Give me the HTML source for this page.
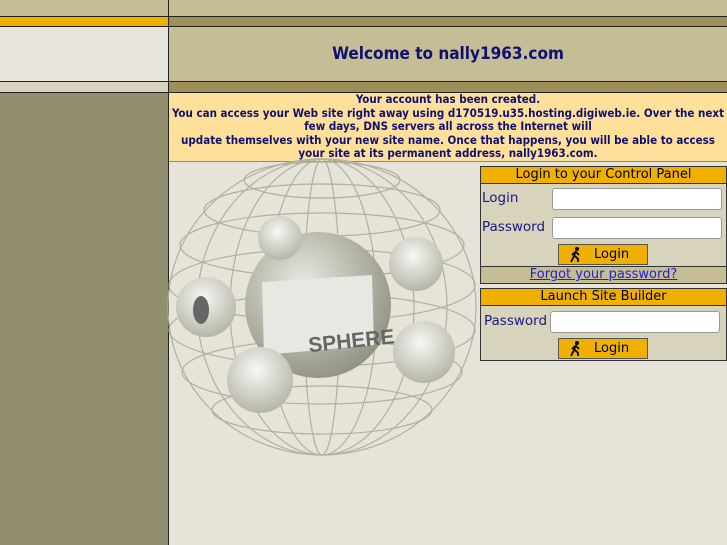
<!DOCTYPE html>
<html><head><style>
body{margin:0;width:727px;height:545px;background:#e6e4d8;font-family:"DejaVu Sans","Liberation Sans",sans-serif;position:relative;overflow:hidden}
div{position:absolute;box-sizing:border-box}
.ln{background:#222;height:1px}
.t{color:#1a1a80}
input{position:absolute;border:1px solid #999;border-radius:3px;background:#fff;height:22px;box-sizing:border-box}
.btn{background:#f0b000;border:1px solid #555;font-size:13px;color:#000;line-height:19px}
.btn svg{position:absolute;left:10px;top:2px}
.btn span{position:absolute;left:35px;top:0}
</style></head><body>
<div style="left:0;top:0;width:168px;height:16px;background:#c4bd96"></div>
<div style="left:169px;top:0;width:558px;height:16px;background:#c4bd96"></div>
<div style="left:0;top:17px;width:168px;height:9px;background:#f0b000"></div>
<div style="left:169px;top:17px;width:558px;height:9px;background:#9c9058"></div>
<div style="left:0;top:27px;width:168px;height:54px;background:#e8e6dc"></div>
<div style="left:169px;top:27px;width:558px;height:54px;background:#c4bd96;text-align:center;line-height:54px;font-size:17px;font-weight:bold;color:#101070;font-family:'DejaVu Sans Condensed','DejaVu Sans',sans-serif;font-stretch:condensed">Welcome to nally1963.com</div>
<div style="left:0;top:82px;width:168px;height:10px;background:#d8d3bd"></div>
<div style="left:169px;top:82px;width:558px;height:10px;background:#9c9058"></div>
<div class="ln" style="left:0;top:16px;width:727px"></div>
<div class="ln" style="left:0;top:26px;width:727px"></div>
<div class="ln" style="left:0;top:81px;width:727px"></div>
<div class="ln" style="left:0;top:92px;width:727px"></div>
<div style="left:0;top:93px;width:168px;height:452px;background:#938e6e"></div>
<div style="left:168px;top:0;width:1px;height:545px;background:#222"></div>
<div style="left:169px;top:93px;width:558px;height:68px;background:#ffe09a;text-align:center;font-size:11.5px;font-weight:bold;color:#101070;line-height:13.6px;font-family:'DejaVu Sans Condensed','DejaVu Sans',sans-serif;font-stretch:condensed;white-space:nowrap">Your account has been created.<br>You can access your Web site right away using d170519.u35.hosting.digiweb.ie. Over the next<br>few days, DNS servers all across the Internet will<br>update themselves with your new site name. Once that happens, you will be able to access<br>your site at its permanent address, nally1963.com.</div>
<div class="ln" style="left:169px;top:161px;width:558px;background:#888"></div>
<svg style="position:absolute;left:0;top:0" width="727" height="545">
<g fill="none" stroke="#b0b0a0" stroke-width="1.2">
<ellipse cx="322" cy="307" rx="154" ry="148"/>
<ellipse cx="322" cy="307" rx="125" ry="148"/>
<ellipse cx="322" cy="307" rx="92" ry="148"/>
<ellipse cx="322" cy="307" rx="55" ry="148"/>
<ellipse cx="322" cy="307" rx="18" ry="148"/>
<ellipse cx="322" cy="180" rx="78" ry="18"/>
<ellipse cx="322" cy="210" rx="118" ry="26"/>
<ellipse cx="322" cy="245" rx="142" ry="32"/>
<ellipse cx="322" cy="285" rx="153" ry="36"/>
<ellipse cx="322" cy="330" rx="153" ry="36"/>
<ellipse cx="322" cy="372" rx="140" ry="32"/>
<ellipse cx="322" cy="410" rx="110" ry="24"/>
</g>
<defs><radialGradient id="g" cx="40%" cy="35%" r="70%"><stop offset="0" stop-color="#e8e8e0"/><stop offset="1" stop-color="#8f9080"/></radialGradient>
<radialGradient id="s" cx="45%" cy="35%" r="70%"><stop offset="0" stop-color="#f8f8f4"/><stop offset="1" stop-color="#b0b0a2"/></radialGradient></defs>
<circle cx="318" cy="305" r="73" fill="url(#g)"/>
<path d="M262 282 L372 275 L374 345 L264 355 Z" fill="#e8e8e2"/>
<text x="308" y="349" font-size="21" font-weight="bold" fill="#666" font-family="Liberation Sans" transform="rotate(-6 340 340)">SPHERE</text>
<circle cx="206" cy="307" r="30" fill="url(#s)"/>
<circle cx="260" cy="380" r="33" fill="url(#s)"/>
<circle cx="280" cy="238" r="22" fill="url(#s)"/>
<circle cx="416" cy="264" r="27" fill="url(#s)"/>
<circle cx="424" cy="352" r="31" fill="url(#s)"/>
<ellipse cx="201" cy="310" rx="8" ry="14" fill="#666"/>
</svg>
<div style="left:480px;top:166px;width:247px;height:118px;background:#d8d3bd;border:1px solid #333"></div>
<div style="left:481px;top:167px;width:245px;height:17px;background:#f0b000;border-bottom:1px solid #333;text-align:center;font-size:13px;line-height:16px">Login to your Control Panel</div>
<div class="t" style="left:482px;top:190px;font-size:13.5px">Login</div>
<input style="left:552px;top:188px;width:170px">
<div class="t" style="left:482px;top:219px;font-size:13.5px">Password</div>
<input style="left:552px;top:217px;width:170px">
<div class="btn" style="left:558px;top:244px;width:90px;height:21px"><svg width="14" height="16" viewBox="0 0 14 16"><circle cx="8" cy="2" r="2"/><path d="M7 4 L5 9 L2 15 M6 9 L9 12 L9 15 M7 5 L10 8 M6 5 L3 8" stroke="#000" stroke-width="1.8" fill="none"/></svg><span>Login</span></div>
<div style="left:481px;top:266px;width:245px;height:17px;background:#c4bd96;border-top:1px solid #333;text-align:center;font-size:13px;line-height:16px;color:#22c;text-decoration:underline">Forgot your password?</div>
<div style="left:480px;top:288px;width:247px;height:73px;background:#d8d3bd;border:1px solid #333"></div>
<div style="left:481px;top:289px;width:245px;height:17px;background:#f0b000;border-bottom:1px solid #333;text-align:center;font-size:13px;line-height:16px">Launch Site Builder</div>
<div class="t" style="left:484px;top:313px;font-size:13.5px">Password</div>
<input style="left:550px;top:311px;width:170px">
<div class="btn" style="left:558px;top:338px;width:90px;height:21px"><svg width="14" height="16" viewBox="0 0 14 16"><circle cx="8" cy="2" r="2"/><path d="M7 4 L5 9 L2 15 M6 9 L9 12 L9 15 M7 5 L10 8 M6 5 L3 8" stroke="#000" stroke-width="1.8" fill="none"/></svg><span>Login</span></div>
</body></html>
